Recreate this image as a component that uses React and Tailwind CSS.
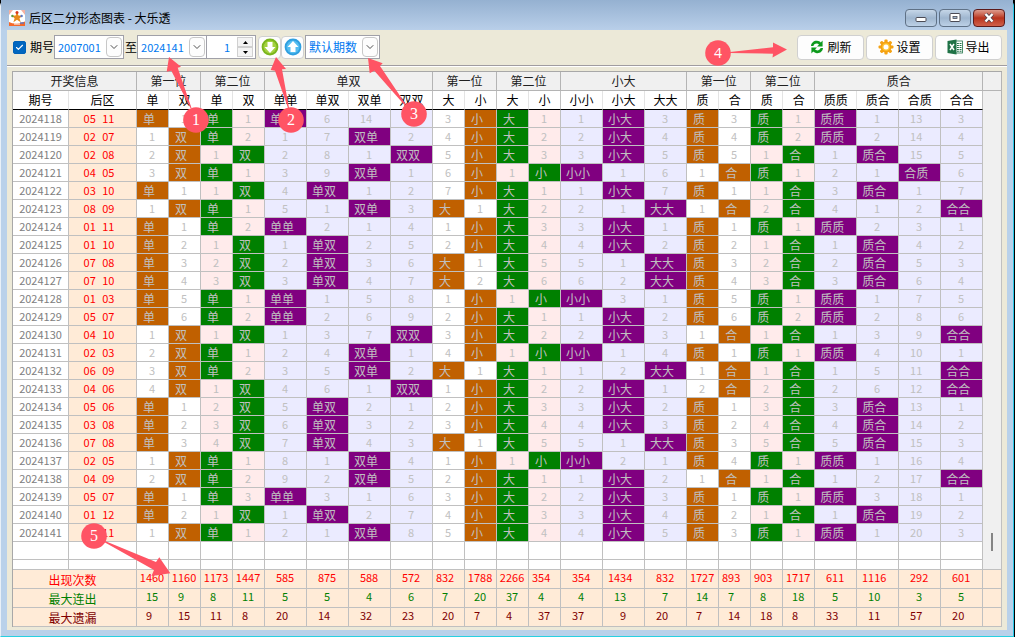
import React, { useState } from 'react';
import clsx from 'clsx';
import { Check, ChevronDown } from 'lucide-react';

const DRAWS = [
  ['2024118', 5, 11], ['2024119', 2, 7], ['2024120', 2, 8], ['2024121', 4, 5],
  ['2024122', 3, 10], ['2024123', 8, 9], ['2024124', 1, 11], ['2024125', 1, 10],
  ['2024126', 7, 8], ['2024127', 7, 10], ['2024128', 1, 3], ['2024129', 5, 7],
  ['2024130', 4, 10], ['2024131', 2, 3], ['2024132', 6, 9], ['2024133', 4, 6],
  ['2024134', 5, 6], ['2024135', 3, 8], ['2024136', 7, 8], ['2024137', 2, 5],
  ['2024138', 4, 9], ['2024139', 5, 7], ['2024140', 1, 12], ['2024141', 2, 11]
];

// miss: gap already accumulated before the first visible draw
const GROUPS = [
  {
    name: '单双',
    mark: (n) => (n % 2 ? '单' : '双'),
    first: ['单', '双'],
    pairs: ['单单', '单双', '双单', '双双'],
    miss: [0, 0, 0, 0, 0, 5, 13, 0]
  },
  {
    name: '小大',
    mark: (n) => (n >= 6 ? '大' : '小'),
    first: ['大', '小'],
    pairs: ['小小', '小大', '大大'],
    miss: [2, 0, 0, 0, 0, 0, 2]
  },
  {
    name: '质合',
    mark: (n) => ([1, 2, 3, 5, 7, 11].includes(n) ? '质' : '合'),
    first: ['质', '合'],
    pairs: ['质质', '质合', '合质', '合合'],
    miss: [0, 2, 0, 0, 0, 0, 12, 2]
  }
];

const COLUMNS = GROUPS.flatMap((group) => {
  const labels = [...group.first, ...group.first, ...group.pairs];
  return labels.map((label, i) => {
    const kind = i < 2 ? 'first' : i < 4 ? 'second' : 'pair';
    return {
      label,
      kind,
      miss: group.miss[i],
      groupEnd: i === 1 || i === 3 || i === labels.length - 1,
      hit: (a, b) => {
        if (kind === 'first') return group.mark(a) === label;
        if (kind === 'second') return group.mark(b) === label;
        return group.mark(a) + group.mark(b) === label;
      }
    };
  });
});

const SUMMARY = [
  {
    name: '出现次数',
    color: 'text-[#ff0000]',
    values: [1460, 1160, 1173, 1447, 585, 875, 588, 572, 832, 1788, 2266, 354, 354, 1434, 832, 1727, 893, 903, 1717, 611, 1116, 292, 601]
  },
  {
    name: '最大连出',
    color: 'text-[#008000]',
    values: [15, 9, 8, 11, 5, 5, 4, 6, 7, 20, 37, 4, 4, 13, 7, 14, 7, 8, 18, 5, 10, 3, 5]
  },
  {
    name: '最大遗漏',
    color: 'text-[#800000]',
    values: [9, 15, 11, 8, 20, 14, 32, 23, 20, 7, 4, 37, 37, 9, 20, 7, 14, 18, 8, 33, 11, 57, 20]
  }
];

const HIT_BG = { first: 'bg-[#c06000]', second: 'bg-[#008000]', pair: 'bg-[#800080]' };
const MISS_BG = { first: 'bg-white', second: 'bg-[#ffebeb]', pair: 'bg-[#ebebff]' };

const buildRows = () => {
  const gaps = COLUMNS.map((col) => col.miss);
  return DRAWS.map(([issue, a, b]) => ({
    issue,
    a: String(a).padStart(2, '0'),
    b: String(b).padStart(2, '0'),
    cells: COLUMNS.map((col, i) => {
      const hit = col.hit(a, b);
      gaps[i] = hit ? 0 : gaps[i] + 1;
      return { hit, text: hit ? col.label : String(gaps[i]) };
    })
  }));
};

const rows = buildRows();

const AppIcon = () => (
  <svg viewBox="0 0 16 16" className="h-4 w-4">
    <rect width="16" height="16" fill="#fff" />
    <path d="M0 0h4L0 5zM16 0v5l-4-5z" fill="#f5b0a0" />
    <path d="M8 2l1.5 3.6 4 .2-3 2.5 1.2 3.9L8 9.8l-3.6 2.4 1.2-3.9-3-2.5 4-.2z" fill="#e88a1a" />
    <circle cx="8" cy="2.6" r="1.5" fill="#d8381c" />
    <circle cx="3.4" cy="6" r="1.2" fill="#5a9b3c" />
    <circle cx="12.6" cy="6" r="1.2" fill="#5b78c8" />
    <path d="M0 12q4 2 8 1.500t8-2v4.500H0z" fill="#f4692a" />
    <path d="M5 14h6" stroke="#fff" strokeWidth="1" />
    <path d="M11 13h4" stroke="#5b78c8" strokeWidth="1.4" />
  </svg>
);

const RefreshIcon = () => (
  <svg viewBox="0 0 16 16" className="h-4 w-4" fill="#0c9a1c">
    <path d="M2 7C2.3 3.6 5 1.6 8 1.8c1.6.1 2.9.7 3.8 1.6L13.6 1.6V7.4H8l2-2C8.6 4.2 5.3 4 4.4 7z" />
    <path d="M14 9c-.3 3.4-3 5.4-6 5.2-1.600-.1-2.900-.7-3.800-1.600L2.400 14.400V8.600H8l-2 2c1.400 1.200 4.700 1.400 5.600-1.600z" />
  </svg>
);

const GearIcon = () => (
  <svg viewBox="0 0 16 16" className="h-4 w-4">
    <g fill="#f5a212">
      <rect x="6.400" y="0.500" width="3.200" height="15" rx="1" />
      <rect x="6.400" y="0.500" width="3.200" height="15" rx="1" transform="rotate(45 8 8)" />
      <rect x="6.400" y="0.500" width="3.200" height="15" rx="1" transform="rotate(90 8 8)" />
      <rect x="6.400" y="0.500" width="3.200" height="15" rx="1" transform="rotate(135 8 8)" />
      <circle cx="8" cy="8" r="5.500" />
    </g>
    <circle cx="8" cy="8" r="3.800" fill="#ffc736" />
    <circle cx="8" cy="8" r="2.500" fill="#fff" />
  </svg>
);

const ExcelIcon = () => (
  <svg viewBox="0 0 16 16" className="h-4 w-4">
    <rect x="8" y="2" width="7.500" height="12" fill="#fff" stroke="#1f7246" strokeWidth="0.800" />
    <path d="M10 4.500h4.500M10 6.500h4.500M10 8.500h4.500M10 10.500h4.500M10 12.300h4.500" stroke="#1f7246" strokeWidth="1.100" />
    <path d="M12.300 3v10" stroke="#fff" strokeWidth="0.700" />
    <path d="M0.500 2L9.500 0.400v15.200L0.500 14z" fill="#1f7246" />
    <path d="M3 5l4 6M7 5l-4 6" stroke="#fff" strokeWidth="1.500" />
  </svg>
);

const ArrowBall = ({ up }) => (
  <svg viewBox="0 0 18 18" className="h-[18px] w-[18px]">
    <circle cx="9" cy="9" r="8.400" fill={up ? '#2f9fe0' : '#7ab51d'} />
    <circle cx="9" cy="9" r="6.500" fill={up ? '#55bdf0' : '#a3d13f'} />
    {up ? (
      <path d="M9 3l5.500 6h-3v5h-5V9h-3z" fill="#fff" />
    ) : (
      <path d="M9 15L3.500 9h3V4h5v5h3z" fill="#fff" />
    )}
  </svg>
);

const Combo = ({ label, options, className }) => (
  <div className={clsx('relative h-6 shrink-0', className)}>
    <select
      aria-label={label}
      className="h-full w-full appearance-none border border-[#a0a0a8] bg-white pl-[3px] pr-4 text-[#0078f0] outline-none"
    >
      {options.map((option) => (
        <option key={option}>{option}</option>
      ))}
    </select>
    <span className="pointer-events-none absolute right-0.5 top-0.5 flex h-5 w-4 items-center justify-center rounded-sm border border-[#c8c8c8] bg-[#fdfdfd]">
      <ChevronDown className="h-3 w-3 shrink-0 text-[#505050]" strokeWidth={2} />
    </span>
  </div>
);

const ToolButton = ({ icon, children }) => (
  <button className="flex h-[25px] w-[67px] items-center justify-center gap-0.5 rounded border border-[#d0d0d0] bg-[#fdfdfd] text-black">
    {icon}
    {children}
  </button>
);

const TitleBar = () => (
  <header className="flex h-[30px] items-center bg-linear-to-b from-[#95b1d1] to-[#b9cfe9] pl-2 pr-2 pt-[5px]">
    <AppIcon />
    <h1 className="ml-1 text-xs text-black">后区二分形态图表 - 大乐透</h1>
    <div className="ml-auto flex gap-0.5">
      <button aria-label="最小化" className="flex h-[18px] w-8 items-center justify-center rounded-sm border border-[#5f7186] bg-linear-to-b from-[#c5d6e8] via-[#9fb6cf] to-[#bcd0e6]">
        <svg viewBox="0 0 12 12" className="mt-1 h-3 w-3">
          <rect x="1" y="3.500" width="10" height="4" rx="1" fill="#fff" stroke="#4b4b55" />
        </svg>
      </button>
      <button aria-label="最大化" className="flex h-[18px] w-8 items-center justify-center rounded-sm border border-[#5f7186] bg-linear-to-b from-[#c5d6e8] via-[#9fb6cf] to-[#bcd0e6]">
        <svg viewBox="0 0 12 12" className="h-3 w-3">
          <rect x="1" y="1.500" width="10" height="8" rx="1" fill="#fff" stroke="#4b4b55" />
          <rect x="4" y="4.500" width="4" height="2" fill="#9fb6cf" stroke="#4b4b55" strokeWidth="0.800" />
        </svg>
      </button>
      <button aria-label="关闭" className="flex h-[18px] w-8 items-center justify-center rounded-sm border border-[#5c1a1a] bg-linear-to-b from-[#dc9a8c] via-[#b8321c] to-[#d0604a]">
        <svg viewBox="0 0 12 12" className="h-3 w-3">
          <path d="M2.500 2l7 7.500M9.500 2l-7 7.500" stroke="#50404a" strokeWidth="4" />
          <path d="M2.500 2l7 7.500M9.500 2l-7 7.500" stroke="#fff" strokeWidth="2.400" />
        </svg>
      </button>
    </div>
  </header>
);

const Toolbar = () => {
  const [enabled, setEnabled] = useState(true);
  const [count, setCount] = useState(1);

  return (
    <div className="flex h-9 items-center border-b border-[#a09ca0] pb-px pl-1.5 pr-[5px] text-xs">
      <label className="flex items-center text-black">
        <span className="relative mr-1 flex h-[13px] w-[13px]">
          <input
            type="checkbox"
            checked={enabled}
            onChange={(e) => setEnabled(e.target.checked)}
            className="h-full w-full appearance-none rounded-xs border border-[#0061b8] bg-white checked:bg-[#0067c0]"
          />
          <Check className="pointer-events-none absolute left-0.5 top-0.5 h-[9px] w-[9px] text-white" strokeWidth={3} />
        </span>
        期号
      </label>
      <Combo label="起始期号" options={['2007001']} className="w-[70px] text-[11px]" />
      <span className="ml-px text-black">至</span>
      <Combo label="结束期号" options={['2024141']} className="w-[70px] text-[11px]" />
      <div className="-ml-px flex h-6 w-[50px] shrink-0 items-center border border-[#a0a0a8] bg-white pr-0.5">
        <input
          aria-label="期数"
          value={count}
          onChange={(e) => setCount(Number(e.target.value) || 0)}
          className="w-full min-w-0 pr-[7px] text-right text-[11px] text-[#0078f0] outline-none"
        />
        <div className="flex w-4 shrink-0 flex-col">
          <button aria-label="增加" onClick={() => setCount(count + 1)} className="flex h-[10px] w-full items-center justify-center border border-[#d0d0d0] bg-[#f4f4f4]">
            <svg viewBox="0 0 5 3" className="h-[3px] w-[5px]"><path d="M0 3h5L2.500 0z" /></svg>
          </button>
          <button aria-label="减少" onClick={() => setCount(count - 1)} className="flex h-[10px] w-full items-center justify-center border border-[#d0d0d0] bg-[#f4f4f4]">
            <svg viewBox="0 0 5 3" className="h-[3px] w-[5px]"><path d="M0 0h5L2.500 3z" /></svg>
          </button>
        </div>
      </div>
      <button aria-label="向下" className="ml-0.5 flex h-[23px] w-[23px] shrink-0 items-center justify-center rounded border border-[#d0d0d0] bg-[#fdfdfd]">
        <ArrowBall />
      </button>
      <button aria-label="向上" className="flex h-[23px] w-[23px] shrink-0 items-center justify-center rounded border border-[#d0d0d0] bg-[#fdfdfd]">
        <ArrowBall up />
      </button>
      <Combo label="默认期数" options={['默认期数']} className="ml-px w-[75px]" />
      <div className="ml-auto flex shrink-0 gap-0.5">
        <ToolButton icon={<RefreshIcon />}>刷新</ToolButton>
        <ToolButton icon={<GearIcon />}>设置</ToolButton>
        <ToolButton icon={<ExcelIcon />}>导出</ToolButton>
      </div>
    </div>
  );
};

const TrendTable = () => (
  <table className="w-full table-fixed border-separate border-spacing-0 text-center text-[11px] leading-[14px]">
    <colgroup>
      <col className="w-[56px]" />
      <col className="w-[68px]" />
      {COLUMNS.map((col, i) => (
        <col key={i} className={col.kind === 'pair' ? 'w-[42px]' : 'w-[32px]'} />
      ))}
      <col className="w-[19px]" />
    </colgroup>
    <thead className="text-xs leading-4">
      <tr className="h-[19px] bg-[#f0f0f0] text-[#202020] *:border-b *:border-r *:border-[#b4b4b4] *:p-0 *:font-normal">
        <th colSpan={2}>开奖信息</th>
        {GROUPS.map((group) => (
          <React.Fragment key={group.name}>
            <th colSpan={2}>第一位</th>
            <th colSpan={2}>第二位</th>
            <th colSpan={group.pairs.length}>{group.name}</th>
          </React.Fragment>
        ))}
        <th />
      </tr>
      <tr className="h-[19px] text-black *:border-r *:p-0 *:font-normal">
        <th className="border-b border-b-black border-r-[#e4e4e4]">期号</th>
        <th className="border-b border-b-black border-r-[#c0c0c0]">后区</th>
        {COLUMNS.map((col, i) => (
          <th
            key={i}
            className={clsx('border-b border-b-black', col.groupEnd ? 'border-r-[#c0c0c0]' : 'border-r-[#e4e4e4]')}
          >
            {col.label}
          </th>
        ))}
        <th className="border-r-[#b4b4b4] bg-[#f0f0f0]" />
      </tr>
    </thead>
    <tbody>
      {rows.map((row, r) => (
        <tr key={row.issue} className="h-[18px] *:border-b *:border-r *:border-[#c0c0c0] *:pt-0">
          <td className="px-0 pb-0.5 text-[#808080]">{row.issue}</td>
          <td className="bg-[#ffebd7] pb-0.5 pl-0 pr-[7px] text-[#ff0000]">
            <span className="mr-1">{row.a}</span> <span>{row.b}</span>
          </td>
          {row.cells.map((cell, i) => (
            <td
              key={i}
              className={clsx(
                'pl-0 text-[#c0c0c0]',
                cell.hit ? HIT_BG[COLUMNS[i].kind] : MISS_BG[COLUMNS[i].kind],
                cell.hit ? 'pb-0 text-xs leading-4' : 'pb-0.5',
                cell.hit || cell.text.length > 1 ? 'pr-[7px]' : 'pr-px'
              )}
            >
              {cell.text}
            </td>
          ))}
          {r === 0 && (
            <td rowSpan={rows.length + 2} className="bg-[#f0f0f0] px-0 pb-0 align-bottom">
              {/* scroll thumb */}
              <div className="mx-auto mb-[18px] h-[18px] w-0.5 bg-[#858585]" />
            </td>
          )}
        </tr>
      ))}
      {['h-[18px]', 'h-[10px]'].map((height) => (
        <tr key={height} className={clsx(height, '*:border-b *:border-r *:border-[#c0c0c0] *:p-0')}>
          <td />
          <td />
          {COLUMNS.map((col, i) => (
            <td key={i} />
          ))}
        </tr>
      ))}
    </tbody>
    <tfoot className="bg-[#ffebd7]">
      {SUMMARY.map((line) => (
        <tr key={line.name} className={clsx('h-[19px] *:border-b *:border-r *:border-[#c0c0c0]', line.color)}>
          <th colSpan={2} className="pb-0 pl-0 pr-1 pt-0.5 text-xs leading-4 font-normal">{line.name}</th>
          {line.values.map((value, i) => {
            // narrow columns align even digit counts, wide columns odd ones
            const odd = String(value).length % 2 === 1;
            const wide = COLUMNS[i].kind === 'pair';
            return (
              <td key={i} className={clsx('pb-1 pl-0 pt-0', odd === wide ? 'pr-px' : 'pr-[7px]')}>
                {value}
              </td>
            );
          })}
          <td />
        </tr>
      ))}
    </tfoot>
  </table>
);

const CALLOUTS = [
  { n: 1, x: 196, y: 120, d: 'M169 57L181 66.700L177.700 67.700L191.500 108L190.500 108L171.300 70.700L166.700 71.700Z' },
  { n: 2, x: 291, y: 120, d: 'M276 57L286 69L282 69.300L289 108L288 108L275 70.700L270.700 70Z' },
  { n: 3, x: 414, y: 114, d: 'M368 58L382.700 63.300L380 66L405.500 104L404.500 105L374.300 70.700L369.700 73.300Z' },
  { n: 4, x: 718, y: 53, d: 'M787 49.500L773 42.500L773 47.300L730 52L730 53L773 53.700L772.500 57.500Z' },
  { n: 5, x: 94, y: 536, d: 'M170.300 573.300L159.300 557.300L156 562L105 541L105 542.500L154 570L151.500 576Z' }
];

const Callouts = () => (
  <svg viewBox="0 0 1015 637" className="pointer-events-none absolute left-0 top-0 h-[637px] w-[1015px]">
    {CALLOUTS.map((c) => (
      <g key={c.n}>
        <path d={c.d} fill="#ff5464" />
        <circle cx={c.x} cy={c.y} r="12.800" fill="#ff5464" />
        <text
          x={c.x}
          y={c.y + 5}
          textAnchor="middle"
          className={c.n === 4 ? "font-['Open_Sans',sans-serif] text-[14px]" : "font-['Liberation_Serif',serif] text-[16px]"}
          fill="#fff"
        >
          {c.n}
        </text>
      </g>
    ))}
  </svg>
);

const App = () => (
  <div className="relative min-h-screen overflow-hidden bg-black font-['Noto_Sans_CJK_SC',sans-serif]">
    <div className="mr-px flex min-h-screen flex-col rounded-t-md border-b border-l border-r border-b-[#28d0e0] border-l-[#e8f0f8] border-r-[#28c8e8] bg-[#b9d1ea]">
      <TitleBar />
      <main className="mx-1.5 mb-1.5 flex-1 bg-[#ece9d8]">
        <Toolbar />
        <div className="border-t border-white px-[5px] pb-[3px] pt-1">
          <div className="border-l border-t border-[#a8a8a8] bg-white">
            <TrendTable />
          </div>
        </div>
      </main>
    </div>
    <Callouts />
  </div>
);

export default App;
